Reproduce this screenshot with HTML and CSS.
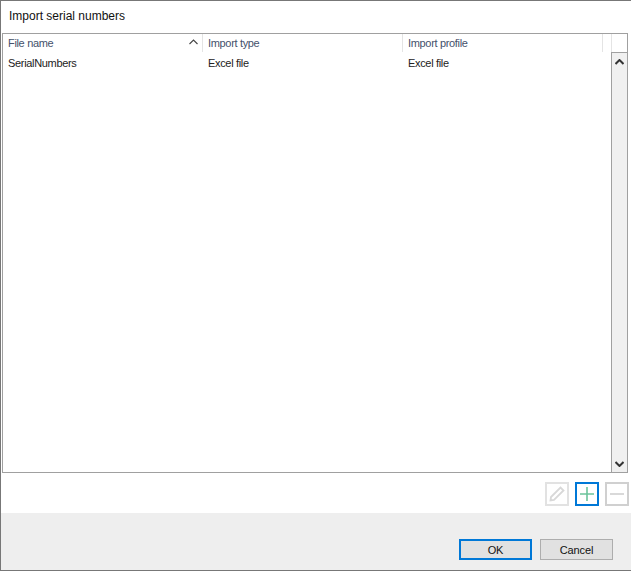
FILE: index.html
```html
<!DOCTYPE html>
<html lang="en">
<head>
<meta charset="utf-8">
<title>Import serial numbers</title>
<link rel="stylesheet" href="styles.css">
</head>
<body>
<div class="dialog">
  <div class="title">Import serial numbers</div>
  <div class="list">
    <div class="head">
      <div class="hcell c1"><span>File name</span>
        <svg class="sort" width="9" height="6" viewBox="0 0 9 6"><path d="M0.5 5L4.5 1L8.5 5" fill="none" stroke="#444" stroke-width="1.1"/></svg>
      </div>
      <div class="hcell c2"><span>Import type</span></div>
      <div class="hcell c3"><span>Import profile</span></div>
      <div class="hcell c4"></div>
    </div>
    <div class="body">
      <div class="rows">
        <div class="row"><div class="cell c1">SerialNumbers</div><div class="cell c2">Excel file</div><div class="cell c3">Excel file</div></div>
      </div>
      <div class="scrollbar">
        <div class="arrow"><svg width="9" height="6" viewBox="0 0 9 6"><path d="M0.5 5L4.5 1L8.5 5" fill="none" stroke="#333" stroke-width="2"/></svg></div>
        <div class="track"></div>
        <div class="arrow"><svg width="9" height="6" viewBox="0 0 9 6"><path d="M0.5 1L4.5 5L8.5 1" fill="none" stroke="#333" stroke-width="2"/></svg></div>
      </div>
    </div>
  </div>
  <div class="tools">
    <button class="tool edit" aria-label="Edit"><svg width="18" height="18" viewBox="0 0 18 18"><path d="M2.5 15.5L3 12L12.5 2.5L15.5 5.5L6 15Z" fill="none" stroke="#d8d8d8" stroke-width="1.8"/></svg></button>
    <button class="tool add" aria-label="Add"><svg width="16" height="16" viewBox="0 0 16 16"><path d="M8 1V15M1 8H15" fill="none" stroke="#6cc49b" stroke-width="1.6"/></svg></button>
    <button class="tool remove" aria-label="Remove"><svg width="16" height="16" viewBox="0 0 16 16"><path d="M1 8H15" fill="none" stroke="#d0d0d0" stroke-width="1.6"/></svg></button>
  </div>
  <div class="footer">
    <button class="btn primary">OK</button>
    <button class="btn">Cancel</button>
  </div>
</div>
</body>
</html>
```
FILE: styles.css
```css
* { box-sizing: border-box; }
html, body { margin: 0; padding: 0; background: #fff; }
body { width: 631px; height: 571px; overflow: hidden; font-family: "Liberation Sans", Arial, sans-serif; font-size: 11px; letter-spacing: -0.33px; color: #1a1a1a; }
.dialog { width: 631px; height: 571px; display: flex; flex-direction: column; border: 1px solid #777; border-right: 0; background: #fff; }
.title { height: 32px; padding: 7px 0 0 8px; font-size: 12px; letter-spacing: 0; line-height: 16px; color: #111; }
.list { margin-left: 1px; width: 626px; height: 440px; border: 1px solid #a0a0a0; display: flex; flex-direction: column; flex: none; }
.head { height: 18px; display: flex; flex: none; }
.hcell { height: 18px; padding-left: 5px; line-height: 18px; color: #44516b; border-right: 1px solid #e4e4e4; position: relative; }
.c1 { width: 200px; }
.c2 { width: 200px; }
.c3 { width: 200px; }
.hcell.c4 { width: 9px; }
.sort { position: absolute; right: 4px; top: 5px; }
.body { flex: 1; display: flex; min-height: 0; }
.rows { flex: 1; }
.row { display: flex; height: 22px; }
.cell { padding-left: 5px; line-height: 22px; color: #222; }
.scrollbar { width: 16px; display: flex; flex-direction: column; background: #f0f0f0; border-left: 1px solid #a0a0a0; border-top: 1px solid #a0a0a0; }
.arrow { height: 17px; display: flex; align-items: center; justify-content: center; flex: none; }
.track { flex: 1; }
.tools { height: 40px; display: flex; justify-content: flex-end; gap: 6px; padding: 9px 2px 0 0; flex: none; }
.tool { width: 24px; height: 24px; padding: 0; background: #fff; border: 2px solid #d8d8d8; display: flex; align-items: center; justify-content: center; }
.tool.edit { border-color: #e2e2e2; }
.tool.add { border-color: #0078d7; }
.tool.remove { border-color: #d0d0d0; }
.footer { flex: 1; background: #eeeeee; display: flex; justify-content: flex-end; align-items: flex-start; gap: 8px; padding: 26px 18px 0 0; }
.btn { width: 73px; height: 21px; padding: 1px 0 0; background: #e1e1e1; border: 1px solid #adadad; font: inherit; font-size: 11px; letter-spacing: -0.1px; line-height: 17px; color: #111; }
.btn.primary { border: 2px solid #0078d7; }
```
